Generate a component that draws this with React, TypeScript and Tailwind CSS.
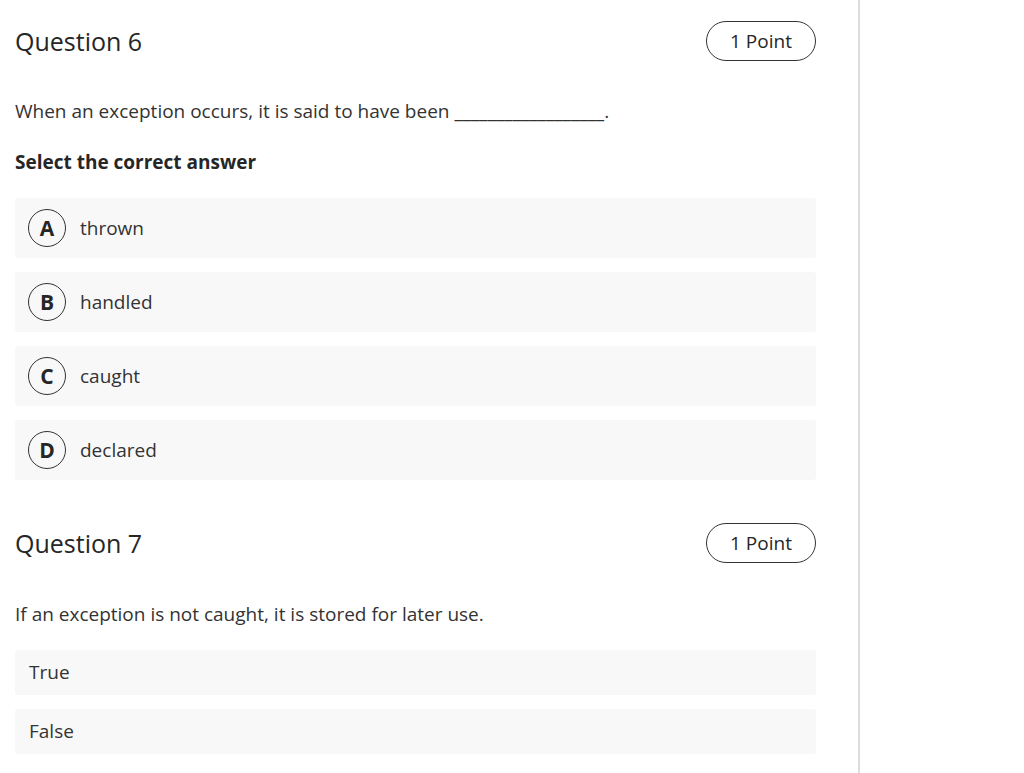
import React from "react";

const font = { fontFamily: '"Open Sans", "Noto Sans", sans-serif' };

function PointBadge() {
  return (
    <div className="flex h-[40px] w-[110px] items-center justify-center rounded-full border-[1.5px] border-[#333333] text-[19px] font-medium text-[#262626]">
      1 Point
    </div>
  );
}

function Header({ title }: { title: string }) {
  return (
    <div className="flex h-[40px] items-center justify-between">
      <h2 className="text-[25px] leading-[34px] font-medium text-[#262626]">{title}</h2>
      <PointBadge />
    </div>
  );
}

function LetterOption({ letter, text }: { letter: string; text: string }) {
  return (
    <div className="flex h-[60px] items-center gap-[14px] rounded-[3px] bg-[#f8f8f8] pl-[13px]">
      <div className="flex h-[38px] w-[38px] items-center justify-center rounded-full border-[1.5px] border-[#333333] text-[21px] font-bold leading-none text-[#262626]">
        {letter}
      </div>
      <span className="text-[19px] text-[#333333]">{text}</span>
    </div>
  );
}

function PlainOption({ text }: { text: string }) {
  return (
    <div className="flex h-[45px] items-center rounded-[3px] bg-[#f8f8f8] pl-[14px] text-[19px] text-[#333333]">
      {text}
    </div>
  );
}

export default function App() {
  return (
    <div className="flex min-h-[773px] w-full bg-white" style={font}>
      <div className="w-[860px] shrink-0 border-r-[2px] border-[#dddddd] pl-[15px] pr-[42px] pt-[21px]">
        <Header title="Question 6" />
        <p className="mt-[37px] text-[19px] leading-[26px] text-[#333333]">
          When an exception occurs, it is said to have been __________________.
        </p>
        <p className="mt-[25px] text-[19px] font-bold leading-[26px] text-[#262626]">Select the correct answer</p>
        <div className="mt-[23px] flex flex-col gap-[14px]">
          <LetterOption letter="A" text="thrown" />
          <LetterOption letter="B" text="handled" />
          <LetterOption letter="C" text="caught" />
          <LetterOption letter="D" text="declared" />
        </div>
        <div className="mt-[43px]">
          <Header title="Question 7" />
        </div>
        <p className="mt-[38px] text-[19px] leading-[26px] text-[#333333]">
          If an exception is not caught, it is stored for later use.
        </p>
        <div className="mt-[23px] flex flex-col gap-[14px]">
          <PlainOption text="True" />
          <PlainOption text="False" />
        </div>
      </div>
      <div className="flex-1" />
    </div>
  );
}
